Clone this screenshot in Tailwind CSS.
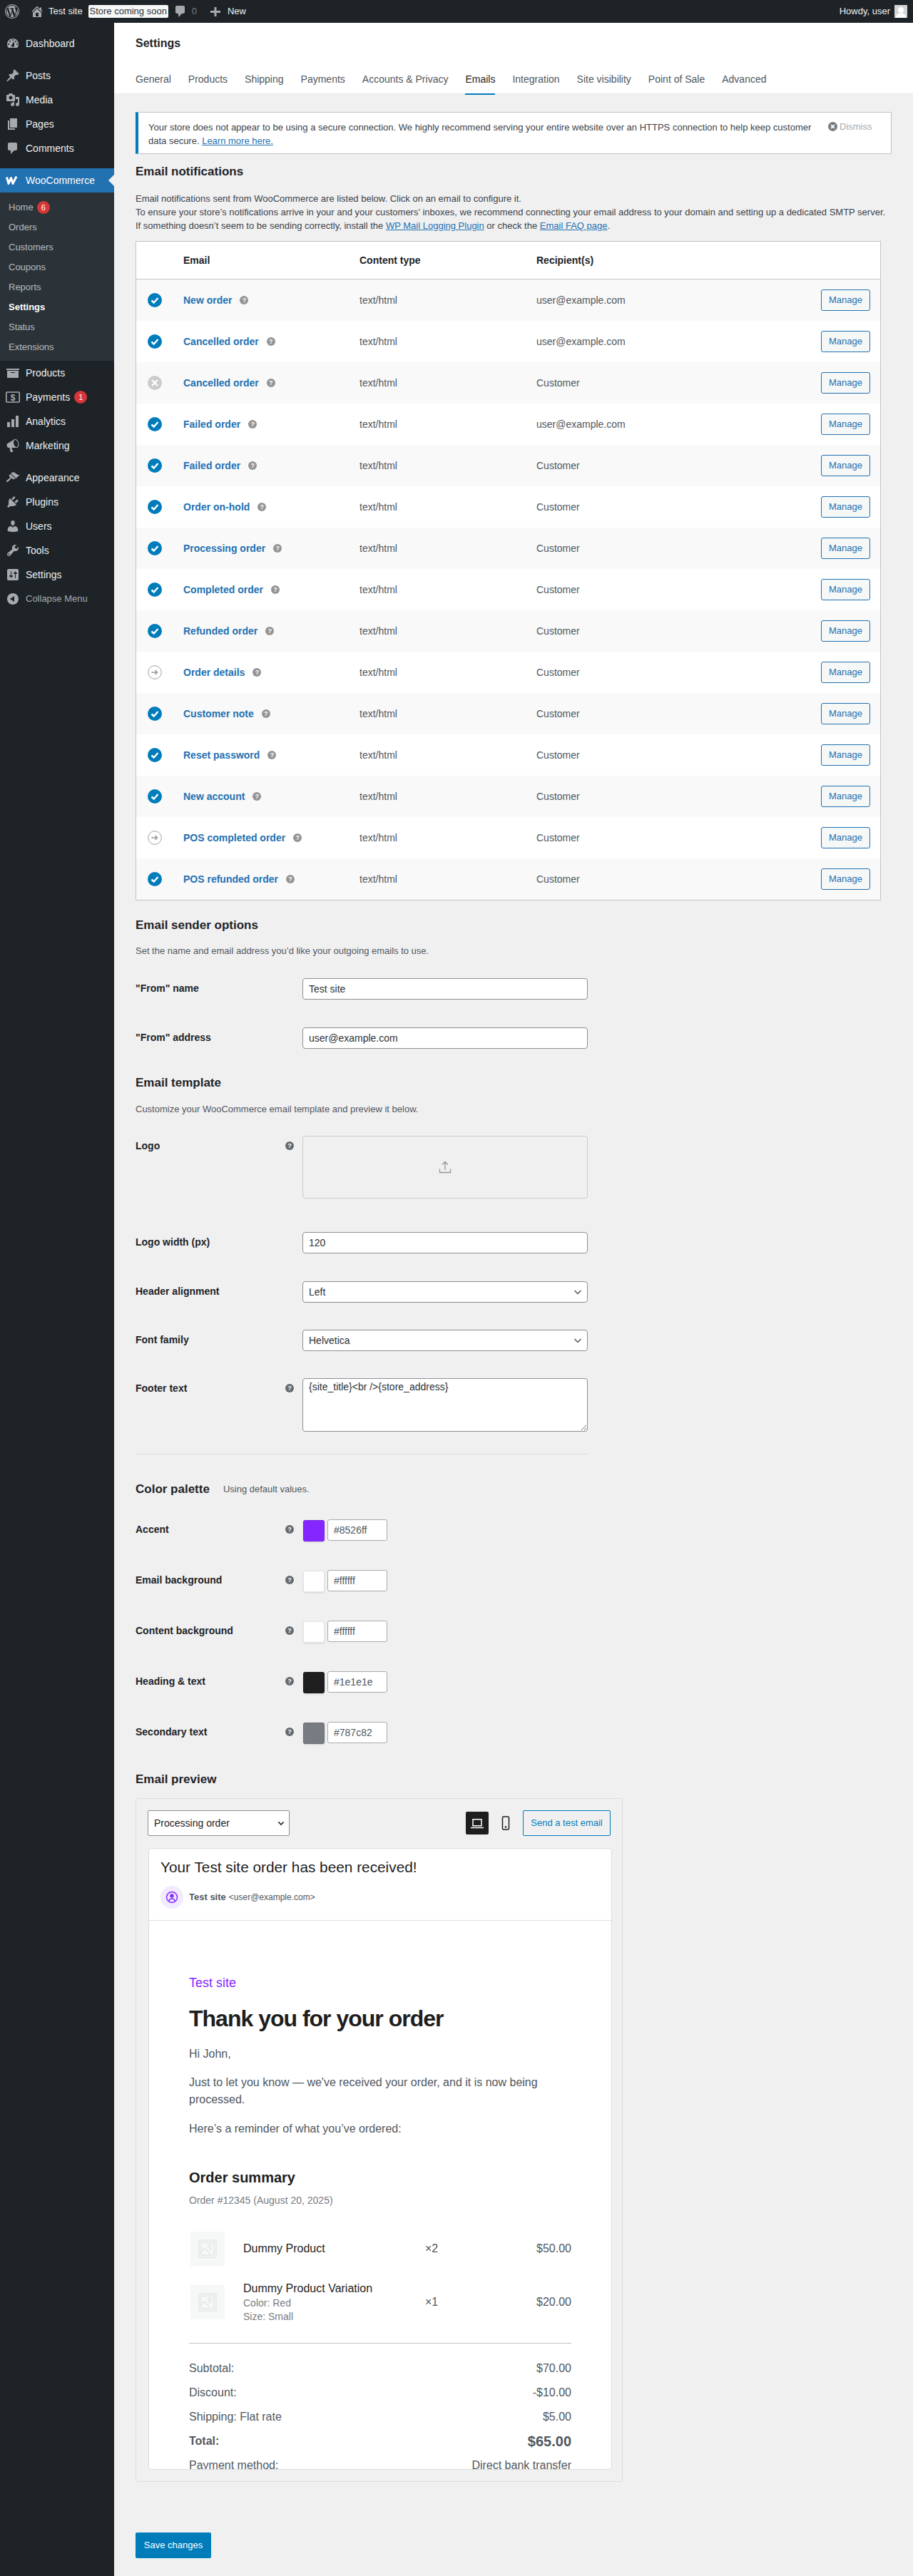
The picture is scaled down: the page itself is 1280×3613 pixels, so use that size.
<!DOCTYPE html>
<html lang="en">
<head>
  <meta charset="UTF-8">
  <title>Settings</title>
  <script src="https://cdn.jsdelivr.net/npm/@tailwindcss/browser@4"></script>
</head>
<body class="bg-[#f0f0f1] font-['Liberation_Sans',Arial,sans-serif] text-[13px] text-[#3c434a]">

  <!-- Admin bar -->
  <header class="h-8 bg-[#1d2327] flex items-center text-[13px] text-[#f0f0f1]">
    <svg class="w-5 h-5 ml-[7px] fill-[#a7aaad]" viewBox="0 0 20 20"><path d="M20 10c0-5.52-4.48-10-10-10S0 4.48 0 10s4.48 10 10 10 10-4.48 10-10zM10 1.01c4.97 0 8.99 4.02 8.99 8.99s-4.02 8.99-8.99 8.99S1.01 14.97 1.01 10 5.03 1.01 10 1.01zM8.01 14.82L4.96 6.61c.49-.03 1.05-.08 1.05-.08.43-.05.38-1.01-.06-.99 0 0-1.29.1-2.13.1-.15 0-.33 0-.52-.01 1.44-2.17 3.9-3.6 6.7-3.6 2.09 0 3.99.79 5.41 2.09-.6-.08-1.45.35-1.45 1.42 0 .66.38 1.22.79 1.88.31.54.5 1.22.5 2.21 0 1.34-1.27 4.48-1.27 4.48l-2.71-7.5c.48-.03.75-.16.75-.16.43-.05.38-1.1-.05-1.08 0 0-1.3.11-2.14.11-.78 0-2.11-.11-2.11-.11-.43-.02-.48 1.06-.05 1.08l.84.08 1.12 3.04zm6.02 2.15L16.64 10s.67-1.69.39-3.81c.63 1.14.94 2.42.94 3.81 0 2.96-1.56 5.58-3.94 6.97zM2.68 6.77L6.5 17.25c-2.67-1.3-4.47-4.08-4.47-7.25 0-1.16.2-2.23.65-3.23zm7.45 4.53l2.29 6.25c-.75.27-1.57.42-2.42.42-.72 0-1.41-.11-2.06-.3z"/></svg>
    <svg class="w-5 h-5 ml-[15px] fill-[#a7aaad]" viewBox="0 0 20 20"><path d="M16 8.5l1.53 1.53-1.06 1.06L10 4.62l-6.47 6.47-1.06-1.06L10 2.5l4 4v-2h2v4zm-6-2.46l6 5.99V18H4v-5.97zM12 17v-5H8v5h4z"/></svg>
    <span class="ml-[6px]">Test site</span>
    <span class="ml-[8px] w-[112px] h-[18px] leading-[18px] text-center bg-[#f6f7f7] text-[#2c3338] rounded-[2px]">Store coming soon</span>
    <svg class="w-5 h-5 ml-[7px] fill-[#a7aaad]" viewBox="0 0 20 20"><path d="M5 2h9c1.100 0 2 .9 2 2v7c0 1.100-.9 2-2 2h-2l-5 5v-5H5c-1.100 0-2-.9-2-2V4c0-1.100.9-2 2-2z"/></svg>
    <span class="ml-[6px] text-[#787c82]">0</span>
    <svg class="w-5 h-5 ml-[16px] fill-[#a7aaad]" viewBox="0 0 20 20"><path d="M17 9v3h-5.500v5h-3v-5H3V9h5.500V4h3v5z"/></svg>
    <span class="ml-[7px]">New</span>
    <span class="ml-auto">Howdy, user</span>
    <span class="w-[18px] h-[18px] ml-[6px] mr-[8px] bg-[#d5d5d5] overflow-hidden">
      <svg class="w-[18px] h-[18px] fill-white" viewBox="0 0 18 18"><circle cx="9" cy="7" r="4"/><path d="M2 18c0-5 3-6.500 7-6.500s7 1.500 7 6.500z"/></svg>
    </span>
  </header>

  <div class="flex h-[3581px]">
    <!-- Sidebar -->
    <aside class="w-40 shrink-0 bg-[#1d2327] text-[14px] text-[#f0f0f1] pt-3">
      <a class="h-[34px] flex items-center"><svg class="w-5 h-5 ml-[8px] mr-[8px] fill-[#a7aaad]" viewBox="0 0 20 20"><path d="M3.760 16h12.480c1.100-1.370 1.760-3.110 1.760-5 0-4.420-3.580-8-8-8s-8 3.580-8 8c0 1.890.66 3.630 1.760 5zM10 4c.55 0 1 .45 1 1s-.45 1-1 1-1-.45-1-1 .45-1 1-1zM6 6c.55 0 1 .45 1 1s-.45 1-1 1-1-.45-1-1 .45-1 1-1zm8 0c.55 0 1 .45 1 1s-.45 1-1 1-1-.45-1-1 .45-1 1-1zm-5.370 5.550L12 7v6c0 1.100-.9 2-2 2s-2-.9-2-2c0-.57.24-1.080.63-1.450zM4 10c.55 0 1 .45 1 1s-.45 1-1 1-1-.45-1-1 .45-1 1-1zm12 0c.55 0 1 .45 1 1s-.45 1-1 1-1-.45-1-1 .45-1 1-1z"/></svg>Dashboard</a>

      <div class="mt-[11px]">
        <a class="h-[34px] flex items-center"><svg class="w-5 h-5 ml-[8px] mr-[8px] fill-[#a7aaad]" viewBox="0 0 20 20"><path d="M10.440 3.020l1.820-1.820 6.360 6.350-1.830 1.820c-1.050-.68-2.480-.57-3.410.36l-.75.75c-.92.93-1.040 2.350-.35 3.410l-1.830 1.820-2.410-2.410-2.800 2.790c-.42.42-3.380 2.710-3.800 2.290s1.860-3.390 2.280-3.810l2.790-2.790L4.100 9.360l1.830-1.820c1.050.69 2.480.57 3.400-.36l.75-.75c.93-.92 1.050-2.350.36-3.410z"/></svg>Posts</a>
        <a class="h-[34px] flex items-center"><svg class="w-5 h-5 ml-[8px] mr-[8px] fill-[#a7aaad]" viewBox="0 0 20 20"><path d="M13 11V4c0-.55-.45-1-1-1h-1.670L9 1H5L3.670 3H2c-.55 0-1 .45-1 1v7c0 .55.45 1 1 1h10c.55 0 1-.45 1-1zM7 4.500c1.380 0 2.500 1.120 2.500 2.500S8.380 9.500 7 9.500 4.500 8.380 4.500 7 5.620 4.500 7 4.500zM14 6h5v10.500c0 1.380-1.120 2.500-2.500 2.500S14 17.880 14 16.500s1.120-2.500 2.500-2.500c.17 0 .34.02.5.05V9h-3V6zm-4 8.050V13h2v3.500c0 1.380-1.120 2.500-2.500 2.500S7 17.880 7 16.500 8.120 14 9.500 14c.17 0 .34.02.5.05z"/></svg>Media</a>
        <a class="h-[34px] flex items-center"><svg class="w-5 h-5 ml-[8px] mr-[8px] fill-[#a7aaad]" viewBox="0 0 20 20"><path d="M6 15V2h10v13H6zm-1 1h8v2H3V5h2v11z"/></svg>Pages</a>
        <a class="h-[34px] flex items-center"><svg class="w-5 h-5 ml-[8px] mr-[8px] fill-[#a7aaad]" viewBox="0 0 20 20"><path d="M5 2h9c1.100 0 2 .9 2 2v7c0 1.100-.9 2-2 2h-2l-5 5v-5H5c-1.100 0-2-.9-2-2V4c0-1.100.9-2 2-2z"/></svg>Comments</a>
      </div>

      <div class="mt-[11px]">
        <a class="relative h-[34px] flex items-center bg-[#2271b1] text-white">
          <svg class="w-5 h-5 ml-[8px] mr-[8px]" viewBox="0 0 20 20" fill="none" stroke="#fff" stroke-width="3" stroke-linejoin="round"><path d="M1.500 5.500l2.500 9 3.500-8 2.500 8 5-10"/></svg>WooCommerce
          <span class="absolute right-0 top-[9px] w-0 h-0 border-y-[8px] border-y-transparent border-r-[8px] border-r-[#f0f0f1]"></span>
        </a>
        <div class="bg-[#2c3338] h-[236px] pt-[7px] text-[13px] text-[#f0f6fc]/70">
          <a class="h-7 pl-3 flex items-center">Home<span class="ml-[5px] w-[18px] h-[18px] leading-[18px] rounded-full bg-[#d63638] text-white text-[11px] text-center">6</span></a>
          <a class="h-7 pl-3 flex items-center">Orders</a>
          <a class="h-7 pl-3 flex items-center">Customers</a>
          <a class="h-7 pl-3 flex items-center">Coupons</a>
          <a class="h-7 pl-3 flex items-center">Reports</a>
          <a class="h-7 pl-3 flex items-center text-white font-semibold">Settings</a>
          <a class="h-7 pl-3 flex items-center">Status</a>
          <a class="h-7 pl-3 flex items-center">Extensions</a>
        </div>
        <a class="h-[34px] flex items-center"><svg class="w-5 h-5 ml-[8px] mr-[8px] fill-[#a7aaad]" viewBox="0 0 20 20"><path d="M19 4v2H1V4h18zM2 7h16v10H2V7zm11 3V9H7v1h6z"/></svg>Products</a>
        <a class="h-[34px] flex items-center"><svg class="w-5 h-5 ml-[8px] mr-[8px]" viewBox="0 0 20 20" fill="none" stroke="#a7aaad" stroke-width="1.600"><rect x="0.800" y="3" width="18.400" height="14" rx="1"/><text x="10" y="14.500" font-size="12" font-weight="700" text-anchor="middle" fill="#a7aaad" stroke="none">$</text></svg>Payments<span class="ml-[6px] w-[18px] h-[18px] leading-[18px] rounded-full bg-[#d63638] text-white text-[11px] text-center">1</span></a>
        <a class="h-[34px] flex items-center"><svg class="w-5 h-5 ml-[8px] mr-[8px] fill-[#a7aaad]" viewBox="0 0 20 20"><path d="M18 2v16h-4V2h4zm-6 5v11H8V7h4zM6 11v7H2v-7h4z"/></svg>Analytics</a>
        <a class="h-[34px] flex items-center"><svg class="w-5 h-5 ml-[8px] mr-[8px] fill-[#a7aaad]" viewBox="0 0 20 20"><path d="M18.150 5.940c.46 1.620.38 3.220-.02 4.480-.42 1.280-1.260 2.180-2.300 2.480-.16.06-.26.06-.4.06-.06.02-.12.02-.18.02-.06.02-.14.02-.22.02h-6.800l2.220 5.500c.02.14-.06.26-.14.34-.08.1-.24.16-.34.16H6.950c-.1 0-.26-.06-.34-.16-.08-.08-.16-.2-.14-.34l-1-5.500H4.250l-.02-.02c-.5.06-1.080-.18-1.540-.62s-.88-1.080-1.060-1.880c-.24-.8-.2-1.560-.02-2.200.18-.62.58-1.080 1.060-1.300l.02-.02 9-5.400c.1-.06.18-.1.24-.16.06-.04.14-.08.24-.12.16-.08.28-.12.5-.18 1.040-.3 2.240.1 3.220.98s1.840 2.240 2.260 3.860zm-2.580 5.980h-.02c.4-.1.74-.34 1.040-.7.58-.7.86-1.760.86-3.040-.02-.64-.1-1.300-.28-1.980-.34-1.360-1.020-2.500-1.780-3.240s-1.680-1.100-2.460-.88c-.82.22-1.400.96-1.700 2-.32 1.040-.28 2.360.06 3.720.38 1.360 1 2.500 1.800 3.240.78.74 1.620 1.100 2.480.88z"/></svg>Marketing</a>
      </div>

      <div class="mt-[11px]">
        <a class="h-[34px] flex items-center"><svg class="w-5 h-5 ml-[8px] mr-[8px] fill-[#a7aaad]" viewBox="0 0 20 20"><path d="M14.480 11.060L7.410 3.990l1.500-1.500c.5-.56 2.300-.47 3.510.32 1.210.8 1.430 1.280 2.910 2.100 1.180.64 2.450 1.260 4.450.85zm-.71.71L6.700 4.700 4.930 6.470c-.39.39-.39 1.020 0 1.410l1.060 1.060c.39.39.39 1.030 0 1.420-.6.6-1.430 1.110-2.210 1.690-.35.26-.7.53-1.010.84C1.430 13.230.4 14.910 1.200 15.700c.79.8 2.470-.23 3.830-1.590.31-.31.58-.66.84-1.010.58-.78 1.090-1.610 1.690-2.210.39-.39 1.020-.39 1.410 0l1.060 1.060c.39.39 1.020.39 1.410 0z"/></svg>Appearance</a>
        <a class="h-[34px] flex items-center"><svg class="w-5 h-5 ml-[8px] mr-[8px] fill-[#a7aaad]" viewBox="0 0 20 20"><path d="M13.110 4.360L9.870 7.600 8 5.730l3.240-3.240c.35-.34 1.050-.2 1.560.32.52.51.66 1.210.31 1.550zm-8 1.770l.91-1.120 9.010 9.010-1.190.84c-.71.71-2.630 1.160-3.820 1.160H6.140L4.900 17.260c-.59.59-1.540.59-2.120 0-.59-.58-.59-1.530 0-2.120l1.240-1.240v-3.880c0-1.130.4-3.190 1.090-3.890zm7.260 3.970l3.240-3.240c.34-.35 1.040-.21 1.550.31.52.51.66 1.210.31 1.550l-3.240 3.250z"/></svg>Plugins</a>
        <a class="h-[34px] flex items-center"><svg class="w-5 h-5 ml-[8px] mr-[8px] fill-[#a7aaad]" viewBox="0 0 20 20"><path d="M10 9.250c-2.270 0-2.730-3.440-2.730-3.440C7 4.020 7.820 2 9.970 2c2.160 0 2.980 2.020 2.710 3.810 0 0-.41 3.440-2.680 3.440zm0 2.570L12.720 10c2.390 0 4.520 2.330 4.520 4.530v2.490s-3.650 1.130-7.240 1.130c-3.650 0-7.240-1.130-7.240-1.130v-2.490c0-2.250 1.940-4.480 4.470-4.480z"/></svg>Users</a>
        <a class="h-[34px] flex items-center"><svg class="w-5 h-5 ml-[8px] mr-[8px] fill-[#a7aaad]" viewBox="0 0 20 20"><path d="M16.680 9.770c-1.340 1.340-3.300 1.670-4.950.99l-5.410 6.520c-.99.99-2.590.99-3.580 0s-.99-2.590 0-3.570l6.520-5.420c-.68-1.650-.35-3.610.99-4.950 1.280-1.280 3.120-1.620 4.720-1.060l-2.890 2.890 2.820 2.820 2.860-2.870c.53 1.580.18 3.390-1.080 4.650zM3.810 16.210c.4.39 1.040.39 1.430 0 .4-.4.4-1.040 0-1.430-.39-.4-1.030-.4-1.430 0-.39.39-.39 1.030 0 1.430z"/></svg>Tools</a>
        <a class="h-[34px] flex items-center"><svg class="w-5 h-5 ml-[8px] mr-[8px] fill-[#a7aaad]" viewBox="0 0 20 20"><path d="M18 16V4c0-1.100-.9-2-2-2H4c-1.100 0-2 .9-2 2v12c0 1.100.9 2 2 2h12c1.100 0 2-.9 2-2zM8 11h1c.55 0 1 .45 1 1s-.45 1-1 1H8v1.500c0 .28-.22.5-.5.5s-.5-.22-.5-.5V13H6c-.55 0-1-.45-1-1s.45-1 1-1h1V5.500c0-.28.22-.5.5-.5s.5.22.5.5V11zm5-2h-1c-.55 0-1-.45-1-1s.45-1 1-1h1V5.500c0-.28.22-.5.5-.5s.5.22.5.5V7h1c.55 0 1 .45 1 1s-.45 1-1 1h-1v5.500c0 .28-.22.5-.5.5s-.5-.22-.5-.5V9z"/></svg>Settings</a>
        <a class="h-[34px] flex items-center text-[13px] text-[#a7aaad]"><svg class="w-5 h-5 ml-[8px] mr-[8px] fill-[#a7aaad]" viewBox="0 0 20 20"><path d="M10 2c4.420 0 8 3.580 8 8s-3.580 8-8 8-8-3.580-8-8 3.580-8 8-8zm2 4l-6 4 6 4V6z"/></svg>Collapse Menu</a>
      </div>
    </aside>

    <!-- Main -->
    <main class="flex-1 min-w-0">
      <div class="h-[100px] bg-white border-b border-[#e8e8e8] pl-[30px] relative">
        <h1 class="pt-[19px] text-[16px] leading-5 font-bold text-[#1d2327]">Settings</h1>
        <nav class="mt-[30px] flex gap-6 text-[14px] leading-5 text-[#50575e]">
          <a>General</a><a>Products</a><a>Shipping</a><a>Payments</a><a>Accounts &amp; Privacy</a>
          <a class="relative text-[#1e1e1e]">Emails<span class="absolute left-0 right-0 top-[30px] h-[2px] bg-[#007cba]"></span></a>
          <a>Integration</a><a>Site visibility</a><a>Point of Sale</a><a>Advanced</a>
        </nav>
      </div>

      <div class="pl-[30px]">
        <!-- Notice -->
        <div class="mt-[25px] w-[1060px] h-[59px] bg-white border border-[#c3c4c7] border-l-4 border-l-[#007cba] pl-[14px] pt-[11px] flex text-[13px] leading-[19px] text-[#3c434a]">
          <p class="w-[953px]">Your store does not appear to be using a secure connection. We highly recommend serving your entire website over an HTTPS connection to help keep customer<br>data secure. <a class="text-[#2271b1] underline">Learn more here.</a></p>
          <span class="flex items-center h-[19px] text-[#a7aaad] text-[13px] -mt-[1px]">
            <svg class="w-[13px] h-[13px] mr-[3px]" viewBox="0 0 14 14"><circle cx="7" cy="7" r="7" fill="#787c82"/><path d="M4.500 4.500l5 5m0-5l-5 5" stroke="#fff" stroke-width="2"/></svg>Dismiss
          </span>
        </div>

        <h2 class="mt-[15px] text-[17px] leading-5 font-bold text-[#1d2327]">Email notifications</h2>
        <p class="mt-[18px] leading-[19px] text-[#3c434a]">Email notifications sent from WooCommerce are listed below. Click on an email to configure it.<br>To ensure your store’s notifications arrive in your and your customers’ inboxes, we recommend connecting your email address to your domain and setting up a dedicated SMTP server.<br>If something doesn’t seem to be sending correctly, install the <a class="text-[#2271b1] underline">WP Mail Logging Plugin</a> or check the <a class="text-[#2271b1] underline">Email FAQ page</a>.</p>

        <!-- Email table -->
        <div class="mt-[12px] w-[1045px] bg-white border border-[#c3c4c7] text-[14px]">
          <div class="h-[53px] grid grid-cols-[66px_247px_248px_1fr] items-center border-b border-[#c3c4c7] font-bold text-[#1d2327]">
            <span></span><span>Email</span><span>Content type</span><span>Recipient(s)</span>
          </div>
          <div id="emailRows"></div>
        </div>

        <!-- Sender options -->
        <h2 class="mt-[25px] text-[17px] leading-5 font-bold text-[#1d2327]">Email sender options</h2>
        <p class="mt-[16px] leading-[19px] text-[#50575e]">Set the name and email address you’d like your outgoing emails to use.</p>

        <div class="mt-[29px] grid grid-cols-[210px_24px_400px] text-[14px]">
          <label class="pt-[4px] leading-5 font-bold text-[#1d2327]">"From" name</label><span></span>
          <input value="Test site" class="h-[30px] px-2 bg-white border border-[#8c8f94] rounded-[4px] text-[#2c3338]">
        </div>
        <div class="mt-[39px] grid grid-cols-[210px_24px_400px] text-[14px]">
          <label class="pt-[4px] leading-5 font-bold text-[#1d2327]">"From" address</label><span></span>
          <input value="user@example.com" class="h-[30px] px-2 bg-white border border-[#8c8f94] rounded-[4px] text-[#2c3338]">
        </div>

        <!-- Template -->
        <h2 class="mt-[38px] text-[17px] leading-5 font-bold text-[#1d2327]">Email template</h2>
        <p class="mt-[17px] leading-[19px] text-[#50575e]">Customize your WooCommerce email template and preview it below.</p>

        <div class="mt-[28px] grid grid-cols-[210px_24px_400px] text-[14px]">
          <label class="pt-[4px] leading-5 font-bold text-[#1d2327]">Logo</label>
          <span class="mt-[8px] w-3 h-3 rounded-full bg-[#646970] text-white text-[9px] leading-3 font-bold text-center">?</span>
          <div class="h-[88px] border border-[#ccc] rounded-[4px] bg-[#f0f0f0] flex items-center justify-center">
            <svg class="w-[18px] h-[18px]" viewBox="0 0 18 18" fill="none" stroke="#949494" stroke-width="1.300"><path d="M9 13V1.500M5 5.500l4-4 4 4M1.500 11.500v5h15v-5"/></svg>
          </div>
        </div>
        <div class="mt-[47px] grid grid-cols-[210px_24px_400px] text-[14px]">
          <label class="pt-[4px] leading-5 font-bold text-[#1d2327]">Logo width (px)</label><span></span>
          <input value="120" class="h-[30px] px-2 bg-white border border-[#8c8f94] rounded-[4px] text-[#2c3338]">
        </div>
        <div class="mt-[39px] grid grid-cols-[210px_24px_400px] text-[14px]">
          <label class="pt-[4px] leading-5 font-bold text-[#1d2327]">Header alignment</label><span></span>
          <div class="relative">
            <select class="w-full h-[30px] px-2 appearance-none bg-white border border-[#8c8f94] rounded-[4px] text-[#2c3338]"><option>Left</option></select>
            <svg class="absolute right-[8px] top-[9px] w-3 h-3" viewBox="0 0 12 12" fill="none" stroke="#50575e" stroke-width="1.500"><path d="M1.500 4L6 8.500 10.500 4"/></svg>
          </div>
        </div>
        <div class="mt-[38px] grid grid-cols-[210px_24px_400px] text-[14px]">
          <label class="pt-[4px] leading-5 font-bold text-[#1d2327]">Font family</label><span></span>
          <div class="relative">
            <select class="w-full h-[30px] px-2 appearance-none bg-white border border-[#8c8f94] rounded-[4px] text-[#2c3338]"><option>Helvetica</option></select>
            <svg class="absolute right-[8px] top-[9px] w-3 h-3" viewBox="0 0 12 12" fill="none" stroke="#50575e" stroke-width="1.500"><path d="M1.500 4L6 8.500 10.500 4"/></svg>
          </div>
        </div>
        <div class="mt-[38px] grid grid-cols-[210px_24px_400px] text-[14px]">
          <label class="pt-[4px] leading-5 font-bold text-[#1d2327]">Footer text</label>
          <span class="mt-[8px] w-3 h-3 rounded-full bg-[#646970] text-white text-[9px] leading-3 font-bold text-center">?</span>
          <textarea class="block h-[75px] px-2 pt-[1px] leading-5 bg-white border border-[#8c8f94] rounded-[4px] text-[#2c3338]">{site_title}&lt;br /&gt;{store_address}</textarea>
        </div>

        <div class="mt-[31px] w-[634px] border-t border-[#dcdcde]"></div>

        <!-- Color palette -->
        <div class="mt-[39px] flex items-center leading-5">
          <h2 class="text-[17px] font-bold text-[#1d2327]">Color palette</h2>
          <span class="ml-[19px] text-[#50575e]">Using default values.</span>
        </div>
        <div id="colorRows" class="mt-[32px] flex flex-col gap-[41px] text-[14px]"></div>

        <!-- Email preview -->
        <h2 class="mt-[41px] text-[17px] leading-5 font-bold text-[#1d2327]">Email preview</h2>
        <section class="mt-[16px] w-[683px] h-[959px] border border-[#dcdcde] rounded-[4px] bg-[#f0f0f0] pt-[16px] pl-[16px] pr-[16px]">
          <div class="flex items-center">
            <div class="relative w-[199px] text-[14px]">
              <select class="w-full h-9 pl-2 appearance-none bg-white border border-[#8c8f94] rounded-[2px] text-[#1e1e1e]"><option>Processing order</option></select>
              <svg class="absolute right-[7px] top-[13px] w-[10px] h-[10px]" viewBox="0 0 12 12" fill="none" stroke="#1e1e1e" stroke-width="1.800"><path d="M1.500 4L6 8.500 10.500 4"/></svg>
            </div>
            <span class="ml-auto w-8 h-8 rounded-[2px] bg-[#1e1e1e] flex items-center justify-center">
              <svg class="w-6 h-6" viewBox="0 0 24 24" fill="none" stroke="#fff" stroke-width="1.500"><path d="M6 6.800h12v9H6z"/><path d="M3 18.500h18"/></svg>
            </span>
            <span class="w-8 h-8 ml-2 flex items-center justify-center">
              <svg class="w-6 h-6" viewBox="0 0 24 24" fill="none" stroke="#1e1e1e" stroke-width="1.500"><rect x="7.500" y="3" width="9" height="18" rx="1.500"/><circle cx="12" cy="17.500" r="0.600" fill="#1e1e1e"/></svg>
            </span>
            <a class="ml-2 w-[123px] h-9 leading-[34px] text-center border border-[#007cba] rounded-[2px] text-[13px] text-[#007cba]">Send a test email</a>
          </div>

          <!-- Email card -->
          <div class="mt-[17px] ml-[1px] w-[650px] h-[872px] overflow-hidden bg-white border border-[#dcdcde] rounded-[4px]">
            <div class="h-[101px] border-b border-[#dcdcde] pl-[16px]">
              <p class="pt-[12px] text-[20.8px] leading-7 text-[#1e1e1e]">Your Test site order has been received!</p>
              <div class="mt-[12px] flex items-center">
                <span class="w-8 h-8 rounded-full bg-[#f2ebff] flex items-center justify-center">
                  <svg class="w-5 h-5" viewBox="0 0 20 20" fill="none" stroke="#8526ff" stroke-width="1.500"><circle cx="10" cy="10" r="7.500"/><circle cx="10" cy="8" r="2" fill="#8526ff"/><path d="M5.800 15.500c.5-2.500 2-3.500 4.200-3.500s3.700 1 4.200 3.500"/></svg>
                </span>
                <span class="ml-2 font-bold text-[#50575e]">Test site</span>
                <span class="ml-[4px] text-[12px] text-[#50575e]">&lt;user@example.com&gt;</span>
              </div>
            </div>

            <div class="pl-[56px] pr-[56px]">
              <p class="mt-[75px] text-[18px] leading-6 text-[#8526ff]">Test site</p>
              <h3 class="mt-[18px] text-[32px] leading-10 font-bold tracking-[-1px] text-[#1e1e1e]">Thank you for your order</h3>
              <p class="mt-[18px] text-[16px] leading-6 text-[#50575e]">Hi John,</p>
              <p class="mt-[16px] text-[16px] leading-6 text-[#50575e]">Just to let you know — we've received your order, and it is now being<br>processed.</p>
              <p class="mt-[17px] text-[16px] leading-6 text-[#50575e]">Here’s a reminder of what you’ve ordered:</p>
              <h4 class="mt-[42px] text-[20px] leading-7 font-bold text-[#1e1e1e]">Order summary</h4>
              <p class="mt-[8px] text-[14px] leading-5 text-[#787c82]">Order #12345 (August 20, 2025)</p>

              <div class="mt-[34px] h-12 grid grid-cols-[76px_255px_1fr_auto] items-center text-[16px]">
                <span class="ml-[2px] w-12 h-12 bg-[#f6f7f7] flex items-center justify-center">
                  <svg class="w-[26px] h-[26px]" viewBox="0 0 26 26" fill="none" stroke="#e4e6e7" stroke-width="1.500"><rect x="1" y="1" width="24" height="24" rx="1"/><rect x="4" y="4" width="18" height="18"/><path d="M4 17l5-5 7 8M15 15l3-3"/><circle cx="16" cy="9" r="2"/></svg>
                </span>
                <span class="text-[#1e1e1e]">Dummy Product</span>
                <span class="text-[#50575e]">×2</span>
                <span class="text-[#50575e]">$50.00</span>
              </div>
              <div class="mt-[21px] h-[60px] grid grid-cols-[76px_255px_1fr_auto] items-center text-[16px]">
                <span class="ml-[2px] w-12 h-12 bg-[#f6f7f7] flex items-center justify-center">
                  <svg class="w-[26px] h-[26px]" viewBox="0 0 26 26" fill="none" stroke="#e4e6e7" stroke-width="1.500"><rect x="1" y="1" width="24" height="24" rx="1"/><rect x="4" y="4" width="18" height="18"/><path d="M4 17l5-5 7 8M15 15l3-3"/><circle cx="16" cy="9" r="2"/></svg>
                </span>
                <div>
                  <p class="leading-[22px] text-[#1e1e1e]">Dummy Product Variation</p>
                  <p class="text-[14px] leading-[19px] text-[#787c82]">Color: Red</p>
                  <p class="text-[14px] leading-[19px] text-[#787c82]">Size: Small</p>
                </div>
                <span class="text-[#50575e]">×1</span>
                <span class="text-[#50575e]">$20.00</span>
              </div>

              <div class="mt-[27px] border-t border-[#c3c4c7]"></div>

              <div class="mt-[23px] flex flex-col gap-[10px] text-[16px] leading-6 text-[#50575e]">
                <div class="flex justify-between"><span>Subtotal:</span><span>$70.00</span></div>
                <div class="flex justify-between"><span>Discount:</span><span>-$10.00</span></div>
                <div class="flex justify-between"><span>Shipping: Flat rate</span><span>$5.00</span></div>
                <div class="flex justify-between font-bold"><span>Total:</span><span class="text-[20px]">$65.00</span></div>
                <div class="flex justify-between"><span>Payment method:</span><span>Direct bank transfer</span></div>
              </div>
            </div>
          </div>
        </section>

        <button class="block mt-[71px] w-[106px] h-9 bg-[#007cba] text-white text-[13px] rounded-[2px]">Save changes</button>
      </div>
    </main>
  </div>

  <script>
    const helpDot = `<span class="ml-[11px] inline-block w-3 h-3 rounded-full bg-[#949494] text-white text-[9px] leading-3 font-bold text-center">?</span>`;
    const statusIcons = {
      on: `<svg class="w-5 h-5" viewBox="0 0 20 20"><circle cx="10" cy="10" r="10" fill="#007cba"/><path d="M5.500 10.500l3.200 3 5.800-6.500" fill="none" stroke="#fff" stroke-width="2.400"/></svg>`,
      off: `<svg class="w-5 h-5" viewBox="0 0 20 20"><circle cx="10" cy="10" r="10" fill="#cccccc"/><path d="M6 6l8 8m0-8l-8 8" fill="none" stroke="#fff" stroke-width="2.200"/></svg>`,
      manual: `<svg class="w-5 h-5" viewBox="0 0 20 20" fill="none" stroke="#949494"><circle cx="10" cy="10" r="9.300" stroke-width="0.900"/><path d="M5.500 10h8M10.500 7l3 3-3 3" stroke-width="1.500"/></svg>`
    };
    const emails = [
      ["on", "New order", "user@example.com"],
      ["on", "Cancelled order", "user@example.com"],
      ["off", "Cancelled order", "Customer"],
      ["on", "Failed order", "user@example.com"],
      ["on", "Failed order", "Customer"],
      ["on", "Order on-hold", "Customer"],
      ["on", "Processing order", "Customer"],
      ["on", "Completed order", "Customer"],
      ["on", "Refunded order", "Customer"],
      ["manual", "Order details", "Customer"],
      ["on", "Customer note", "Customer"],
      ["on", "Reset password", "Customer"],
      ["on", "New account", "Customer"],
      ["manual", "POS completed order", "Customer"],
      ["on", "POS refunded order", "Customer"]
    ];
    document.getElementById("emailRows").innerHTML = emails.map((e, i) => `
      <div class="h-[58px] grid grid-cols-[66px_247px_248px_1fr_auto] items-center pr-[14px] ${i % 2 === 0 ? "bg-[#f9f9f9]" : "bg-white"}">
        <span class="pl-[16px]">${statusIcons[e[0]]}</span>
        <span class="flex items-center"><a class="font-bold text-[#2271b1]">${e[1]}</a>${helpDot}</span>
        <span class="text-[#50575e]">text/html</span>
        <span class="text-[#50575e]">${e[2]}</span>
        <a class="w-[69px] h-[30px] leading-[28px] text-center text-[13px] text-[#2271b1] bg-[#f6f7f7] border border-[#2271b1] rounded-[3px]">Manage</a>
      </div>`).join("");

    const colors = [
      ["Accent", "#8526ff", "bg-[#8526ff]"],
      ["Email background", "#ffffff", "bg-white"],
      ["Content background", "#ffffff", "bg-white"],
      ["Heading &amp; text", "#1e1e1e", "bg-[#1e1e1e]"],
      ["Secondary text", "#787c82", "bg-[#787c82]"]
    ];
    document.getElementById("colorRows").innerHTML = colors.map(c => `
      <div class="h-[30px] grid grid-cols-[210px_24px_auto]">
        <label class="pt-[4px] leading-5 font-bold text-[#1d2327]">${c[0]}</label>
        <span class="mt-[8px] w-3 h-3 rounded-full bg-[#646970] text-white text-[9px] leading-3 font-bold text-center">?</span>
        <div class="flex items-start">
          <span class="ml-[1px] mt-[1px] w-[30px] h-[30px] ${c[2]} border border-black/10 rounded-[3px] shadow-sm"></span>
          <input value="${c[1]}" class="ml-[4px] w-[84px] h-[30px] px-2 bg-white border border-[#a7aaad] rounded-[3px] text-[#50575e]">
        </div>
      </div>`).join("");
  </script>
</body>
</html>
